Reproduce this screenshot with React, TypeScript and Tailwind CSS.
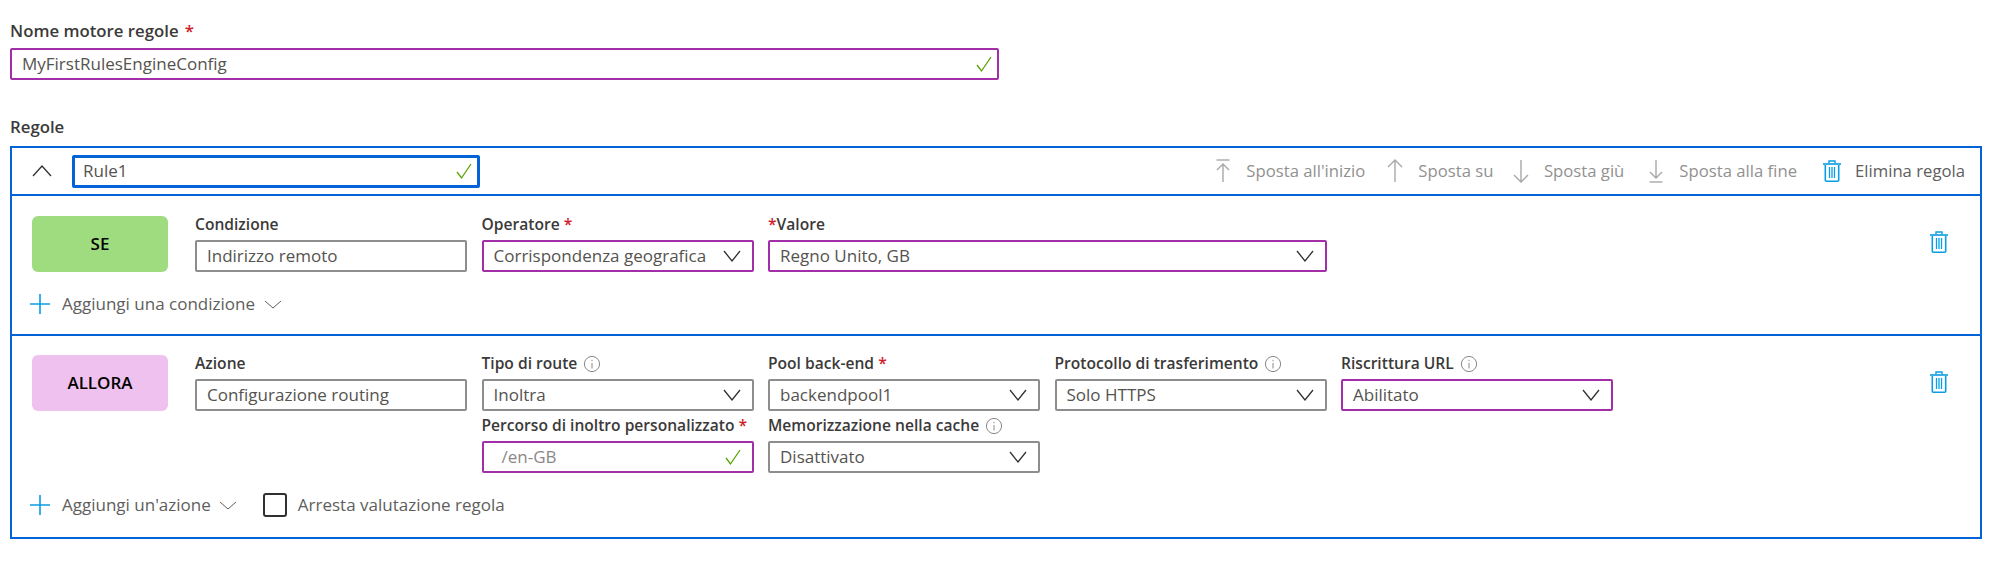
import React from "react";

const BLUE = "#0b9de3";

const Check = () => (
  <svg width="18" height="18" viewBox="0 0 18 18" className="shrink-0" fill="none">
    <path d="M2 10l4.5 6L16 2" stroke="#57a300" strokeWidth="1.3" />
  </svg>
);
const Chevron = () => (
  <svg width="20" height="12" viewBox="0 0 20 12" className="shrink-0" fill="none">
    <path d="M2 1l8 10 8-10" stroke="#323130" strokeWidth="1.3" />
  </svg>
);
const SmallChevron = () => (
  <svg width="18" height="9" viewBox="0 0 18 9" className="shrink-0" fill="none">
    <path d="M1 1l8 7 8-7" stroke="#605e5c" strokeWidth="1" />
  </svg>
);
const Info = () => (
  <svg width="18" height="18" viewBox="0 0 18 18" className="shrink-0" fill="none">
    <circle cx="9" cy="9" r="7.6" stroke="#8a8886" strokeWidth="1" />
    <path d="M9 8v5.5M9 4.8v1.4" stroke="#8a8886" strokeWidth="1" />
  </svg>
);
const Star = () => <span className="text-[#d01c2a]">*</span>;

const Trash = () => (
  <svg width="18" height="22" viewBox="0 0 18 22" className="shrink-0" fill="none" stroke={BLUE}>
    <path d="M0 4h18" strokeWidth="1.6" />
    <path d="M6 3.5V1h6v2.5" strokeWidth="1.4" />
    <path d="M2.3 5v15.2a1 1 0 001 1h11.4a1 1 0 001-1V5" strokeWidth="1.6" />
    <path d="M6.5 7v11M9 7v11M11.5 7v11" strokeWidth="1.3" />
  </svg>
);

const Arrow = ({ dir, bar }: { dir: "up" | "down"; bar?: boolean }) => (
  <svg width="18" height="24" viewBox="0 0 18 24" className="shrink-0" fill="none" stroke="#a9a8a7" strokeWidth="1.4">
    {dir === "up" ? (
      <>
        {bar && <path d="M2.5 1h13" />}
        <path d={bar ? "M9 23V5M3 11l6-6 6 6" : "M9 23V1M2 8l7-7 7 7"} />
      </>
    ) : (
      <>
        {bar && <path d="M2.5 23h13" />}
        <path d={bar ? "M9 1v18M3 13l6 6 6-6" : "M9 1v22M2 16l7 7 7-7"} />
      </>
    )}
  </svg>
);

const Plus = () => (
  <svg width="20" height="20" viewBox="0 0 20 20" className="shrink-0" fill="none" stroke={BLUE} strokeWidth="1.6">
    <path d="M10 0v20M0 10h20" />
  </svg>
);

const Label = ({ children }: { children: React.ReactNode }) => (
  <div className="flex h-[24px] items-start gap-[6px] text-[15.6px] leading-[16px] font-semibold whitespace-nowrap text-[#3b3a39]">
    {children}
  </div>
);

const Field = ({
  text,
  tone = "gray",
  icon,
  muted,
  indent,
}: {
  text: string;
  tone?: "gray" | "purple";
  icon?: "chevron" | "check";
  muted?: boolean;
  indent?: boolean;
}) => (
  <div
    className={`flex h-[32px] items-center justify-between rounded-[2px] border-2 pr-[10px] text-[17px] whitespace-nowrap ${
      tone === "purple" ? "border-[#a32fa8]" : "border-[#8f8d8b]"
    } ${indent ? "pl-[18px]" : "pl-[10px]"} ${muted ? "text-[#8a8886]" : "text-[#55534f]"}`}
  >
    <span>{text}</span>
    {icon === "chevron" && <Chevron />}
    {icon === "check" && <Check />}
  </div>
);

const Cell = ({ label, children, span }: { label: React.ReactNode; children: React.ReactNode; span?: boolean }) => (
  <div className={span ? "col-span-2" : ""}>
    <Label>{label}</Label>
    {children}
  </div>
);

const HeaderAction = ({ icon, text, dark, className = "" }: { icon: React.ReactNode; text: string; dark?: boolean; className?: string }) => (
  <div className={`flex items-center gap-[14px] text-[16.7px] whitespace-nowrap ${dark ? "text-[#605e5c]" : "text-[#929190]"} ${className}`}>
    {icon}
    <span>{text}</span>
  </div>
);

export default function App() {
  return (
    <div className="h-[571px] w-[2000px] overflow-hidden bg-white pt-[21px] pl-[10px] font-['Open_Sans',sans-serif] text-[#3b3a39]">
      <div className="flex h-[24px] items-start gap-[6px] text-[16.8px] leading-[20px] font-semibold whitespace-nowrap">
        <span>Nome motore regole</span> <Star />
      </div>
      <div className="mt-[3px] flex h-[32px] w-[989px] items-center justify-between rounded-[2px] border-2 border-[#a32fa8] pr-[4px] pl-[10px] text-[17px] text-[#55534f]">
        <span>MyFirstRulesEngineConfig</span>
        <Check />
      </div>

      <div className="mt-[38px] h-[18px] text-[16.8px] leading-[18px] font-semibold">Regole</div>

      <div className="mt-[10px] h-[393px] w-[1972px] border-2 border-[#0563d8]">
        <div className="flex h-[48px] items-center border-b-2 border-[#0563d8] pr-[15px] pl-[20px]">
          <svg width="20" height="12" viewBox="0 0 20 12" className="shrink-0" fill="none">
            <path d="M1 11l9-10 9 10" stroke="#323130" strokeWidth="1.3" />
          </svg>
          <div className="ml-[20px] flex h-[33px] w-[408px] items-center justify-between rounded-[2px] border-[3px] border-[#0563d8] pr-[4px] pl-[8px] text-[17px] text-[#55534f]">
            <span>Rule1</span>
            <Check />
          </div>
          <div className="ml-auto flex items-center gap-[21px]">
            <HeaderAction icon={<Arrow dir="up" bar />} text="Sposta all'inizio" />
            <HeaderAction icon={<Arrow dir="up" />} text="Sposta su" className="-mr-[2.5px]" />
            <HeaderAction icon={<Arrow dir="down" />} text="Sposta giù" />
            <HeaderAction icon={<Arrow dir="down" bar />} text="Sposta alla fine" className="ml-[2px]" />
            <HeaderAction icon={<Trash />} text="Elimina regola" dark className="ml-[5px]" />
          </div>
        </div>

        <div className="flex h-[140px] border-b-2 border-[#0563d8] pt-[20px] pl-[20px]">
          <div className="w-[1898px]">
            <div className="flex">
              <div className="flex h-[56px] w-[136px] items-center justify-center rounded-[6px] bg-[#9fdc7f] text-[17px] font-semibold text-black">SE</div>
              <div className="ml-[27px] grid grid-cols-[272px_272px_272px_272px_272px] gap-x-[14.5px]">
                <Cell label="Condizione"><Field text="Indirizzo remoto" /></Cell>
                <Cell label={<span>Operatore <Star /></span>}><Field text="Corrispondenza geografica" tone="purple" icon="chevron" /></Cell>
                <Cell span label={<span><Star />Valore</span>}><Field text="Regno Unito, GB" tone="purple" icon="chevron" /></Cell>
              </div>
            </div>
            <div className="mt-[22px] flex h-[20px] items-center text-[17px] leading-[20px] text-[#605e5c]">
              <span className="-ml-[2px]"><Plus /></span>
              <span className="ml-[12px]">Aggiungi una condizione</span>
              <span className="ml-[9px]"><SmallChevron /></span>
            </div>
          </div>
          <div className="pt-[15px]"><Trash /></div>
        </div>

        <div className="flex pt-[19px] pl-[20px]">
          <div className="w-[1898px]">
            <div className="flex">
              <div className="flex h-[56px] w-[136px] items-center justify-center rounded-[6px] bg-[#efc1ee] text-[17px] font-semibold text-black">ALLORA</div>
              <div className="ml-[27px] grid grid-cols-[272px_272px_272px_272px_272px] gap-x-[14.5px]">
                <Cell label="Azione"><Field text="Configurazione routing" /></Cell>
                <Cell label={<>Tipo di route <Info /></>}><Field text="Inoltra" icon="chevron" /></Cell>
                <Cell label={<span>Pool back-end <Star /></span>}><Field text="backendpool1" icon="chevron" /></Cell>
                <Cell label={<>Protocollo di trasferimento <Info /></>}><Field text="Solo HTTPS" icon="chevron" /></Cell>
                <Cell label={<>Riscrittura URL <Info /></>}><Field text="Abilitato" tone="purple" icon="chevron" /></Cell>
                <div className="col-start-2 mt-[6px]">
                  <Label><span>Percorso di inoltro personalizzato <Star /></span></Label>
                  <Field text="/en-GB" tone="purple" icon="check" muted indent />
                </div>
                <div className="mt-[6px]">
                  <Label>Memorizzazione nella cache <Info /></Label>
                  <Field text="Disattivato" icon="chevron" />
                </div>
              </div>
            </div>
            <div className="mt-[22px] flex h-[20px] items-center text-[17px] leading-[20px] text-[#605e5c]">
              <span className="-ml-[2px]"><Plus /></span>
              <span className="ml-[12px]">Aggiungi un'azione</span>
              <span className="ml-[8px]"><SmallChevron /></span>
              <div className="ml-[26px] h-[24px] w-[24px] shrink-0 rounded-[3px] border-2 border-[#323130]" />
              <span className="ml-[11px]">Arresta valutazione regola</span>
            </div>
          </div>
          <div className="pt-[16px]"><Trash /></div>
        </div>
      </div>
    </div>
  );
}
